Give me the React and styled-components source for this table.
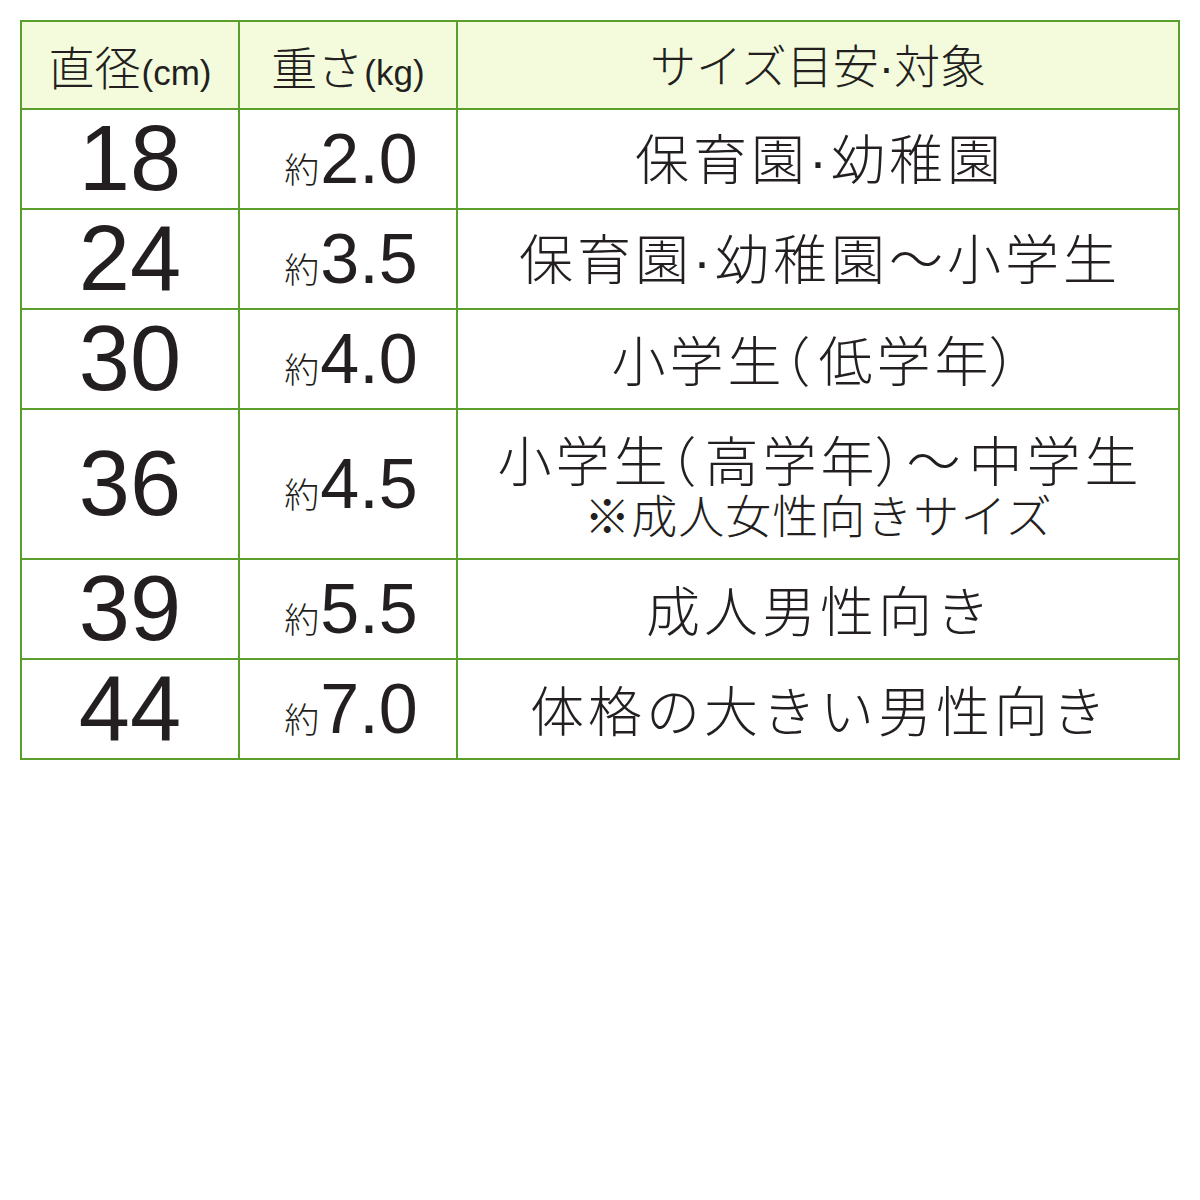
import React from "react";
import styled, { createGlobalStyle } from "styled-components";

const Global = createGlobalStyle`
  html, body { margin: 0; padding: 0; background: #ffffff; }
  body { font-family: "Noto Sans CJK JP", "Noto Sans", sans-serif; color: #231f20; }
`;

const Page = styled.div`
  width: 1200px;
  height: 1200px;
  padding: 20px;
  box-sizing: border-box;
  background: #fff;
`;

const Table = styled.div`
  display: grid;
  grid-template-columns: 216px 216px 720px;
  grid-template-rows: 86px 98px 98px 98px 148px 98px 98px;
  gap: 2px;
  padding: 2px;
  width: 1160px;
  box-sizing: border-box;
  background: #5a9e2c;
`;

const Cell = styled.div`
  display: flex;
  flex-direction: column;
  align-items: center;
  justify-content: center;
  background: ${(p) => (p.$head ? "#f3fbdc" : "#ffffff")};
`;

const HeadLine = styled.div`
  display: flex;
  align-items: baseline;
  white-space: nowrap;
`;

const HeadJa = styled.span`
  font-family: "Noto Sans CJK JP", sans-serif;
  font-weight: 300;
  font-size: 46px;
  line-height: 1.1;
`;

const HeadUnit = styled.span`
  font-family: "Liberation Sans", Arial, sans-serif;
  font-size: 35px;
  line-height: 1;
  margin-left: 1px;
`;

const Dot = styled.span`
  font-family: "Liberation Sans", Arial, sans-serif;
  font-weight: 400;
  letter-spacing: 0;
  margin-right: ${(p) => p.$gap || 0}px;
`;

const Paren = styled.span`
  font-family: "Noto Sans CJK JP", sans-serif;
  margin-left: ${(p) => (p.$open ? -29 : -4)}px;
  margin-right: ${(p) => (p.$open ? 4 : p.$tight ? -26 : -18)}px;
`;

const Tilde = styled.span`
  margin-right: ${(p) => p.$shift || 0}px;
`;

const Diameter = styled.span`
  font-family: "Liberation Sans", Arial, sans-serif;
  font-size: 92px;
  line-height: 1.15;
`;

const WeightLine = styled.div`
  display: flex;
  align-items: baseline;
  white-space: nowrap;
  margin-left: 6px;
`;

const Approx = styled.span`
  font-family: "Noto Sans CJK JP", sans-serif;
  font-weight: 300;
  font-size: 35px;
  line-height: 1;
  margin-right: 1px;
`;

const WeightNum = styled.span`
  font-family: "Liberation Sans", Arial, sans-serif;
  font-size: 70px;
  line-height: 1.15;
`;

const Target = styled.span`
  font-family: "Noto Sans CJK JP", sans-serif;
  font-weight: 300;
  font-size: ${(p) => p.$size || 54}px;
  letter-spacing: ${(p) => p.$ls ?? 4}px;
  margin-right: ${(p) => -(p.$ls ?? 4)}px;
  line-height: 1.1;
  white-space: nowrap;
`;

const D = ({ gap = 4 }) => <Dot $gap={gap}>·</Dot>;
const L = () => <Paren $open>（</Paren>;
const R = ({ tight }) => <Paren $tight={tight}>）</Paren>;

const rows = [
  { d: "18", w: "2.0", t: [{ c: <>保育園<D />幼稚園</> }] },
  { d: "24", w: "3.5", t: [{ c: <>保育園<D />幼稚園～小学生</> }] },
  { d: "30", w: "4.0", t: [{ c: <>小学生<L />低学年<R /></> }] },
  {
    d: "36",
    w: "4.5",
    t: [
      { c: <>小学生<L />高学年<R tight /><Tilde $shift={4}>～</Tilde>中学生</> },
      { c: <>※成人女性向きサイズ</>, size: 46, ls: 1 },
    ],
  },
  { d: "39", w: "5.5", t: [{ c: <>成人男性向き</> }] },
  { d: "44", w: "7.0", t: [{ c: <>体格の大きい男性向き</> }] },
];

export default function App() {
  return (
    <Page>
      <Global />
      <Table>
        <Cell $head>
          <HeadLine>
            <HeadJa>直径</HeadJa>
            <HeadUnit>(cm)</HeadUnit>
          </HeadLine>
        </Cell>
        <Cell $head>
          <HeadLine>
            <HeadJa>重さ</HeadJa>
            <HeadUnit>(kg)</HeadUnit>
          </HeadLine>
        </Cell>
        <Cell $head>
          <HeadLine>
            <HeadJa>
              サイズ目安<D gap={0} />対象
            </HeadJa>
          </HeadLine>
        </Cell>
        {rows.map((r) => (
          <React.Fragment key={r.d}>
            <Cell>
              <Diameter>{r.d}</Diameter>
            </Cell>
            <Cell>
              <WeightLine>
                <Approx>約</Approx>
                <WeightNum>{r.w}</WeightNum>
              </WeightLine>
            </Cell>
            <Cell>
              {r.t.map((line, i) => (
                <Target key={i} $size={line.size} $ls={line.ls}>
                  {line.c}
                </Target>
              ))}
            </Cell>
          </React.Fragment>
        ))}
      </Table>
    </Page>
  );
}
